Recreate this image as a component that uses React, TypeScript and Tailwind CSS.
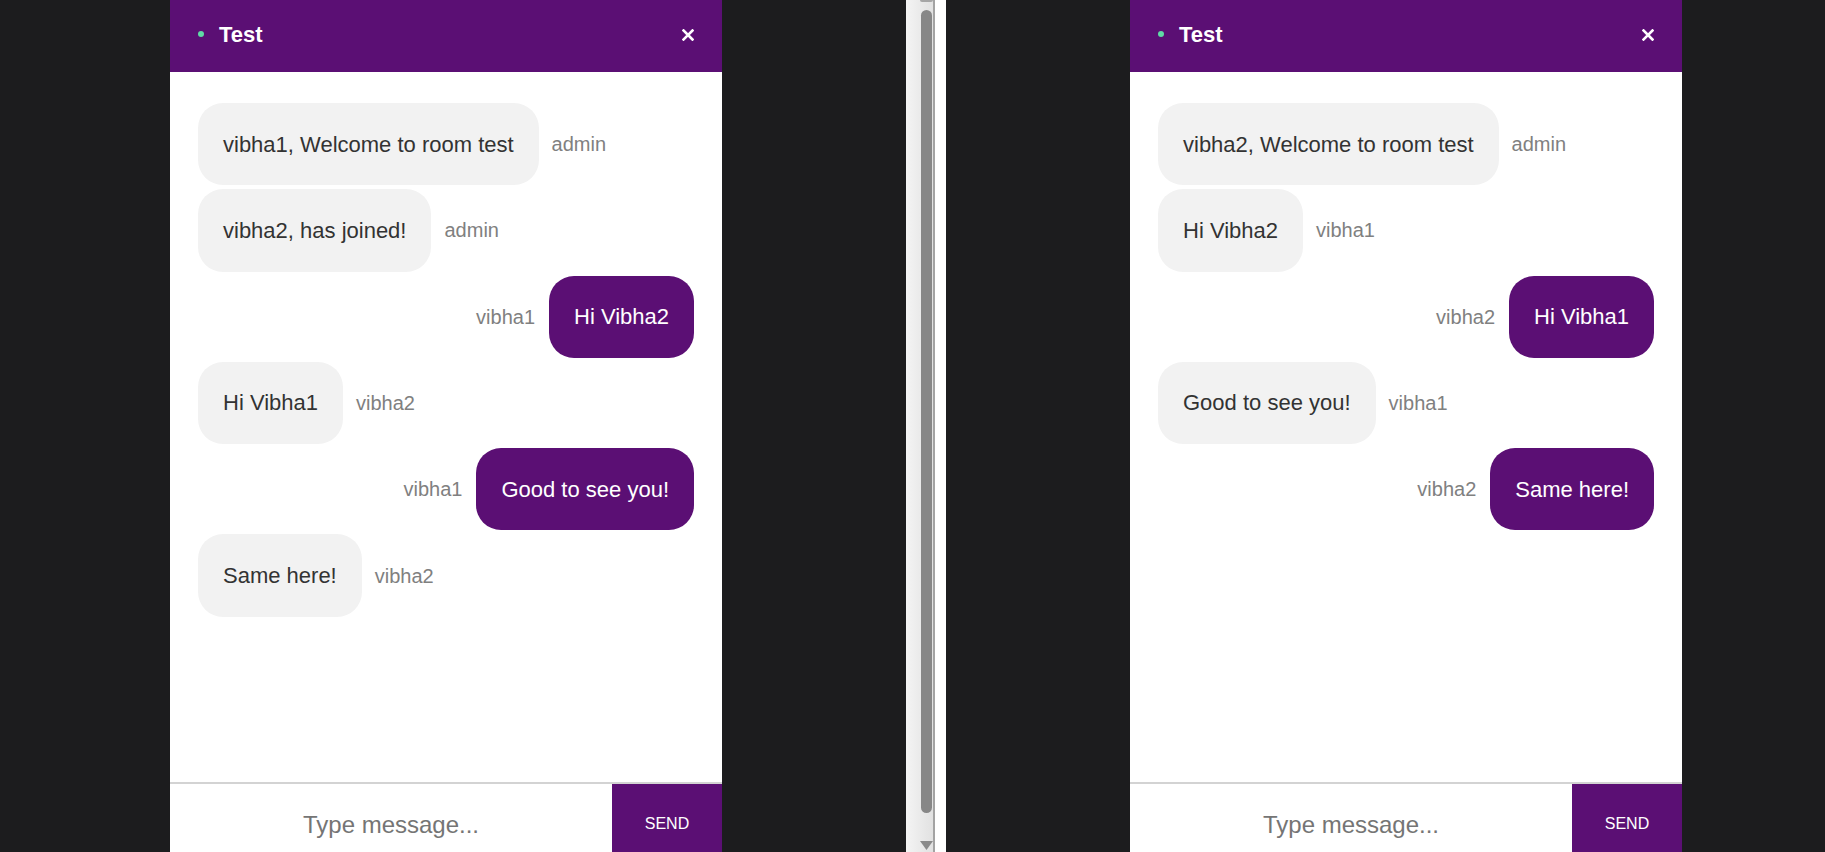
import React from "react"

interface Message {
  text: string
  user: string
  mine?: boolean
}

const leftMessages: Message[] = [
  { text: "vibha1, Welcome to room test", user: "admin" },
  { text: "vibha2, has joined!", user: "admin" },
  { text: "Hi Vibha2", user: "vibha1", mine: true },
  { text: "Hi Vibha1", user: "vibha2" },
  { text: "Good to see you!", user: "vibha1", mine: true },
  { text: "Same here!", user: "vibha2" },
]

const rightMessages: Message[] = [
  { text: "vibha2, Welcome to room test", user: "admin" },
  { text: "Hi Vibha2", user: "vibha1" },
  { text: "Hi Vibha1", user: "vibha2", mine: true },
  { text: "Good to see you!", user: "vibha1" },
  { text: "Same here!", user: "vibha2", mine: true },
]

function MessageRow({ msg }: { msg: Message }) {
  if (msg.mine) {
    return (
      <div className="flex items-center justify-end">
        <span className="mr-[14px] text-[20px] text-[#808080]">{msg.user}</span>
        <div className="rounded-[25px] bg-[#5b0f74] px-[25px] py-[28.5px] text-[22px] leading-[25.3px] text-white">
          {msg.text}
        </div>
      </div>
    )
  }
  return (
    <div className="flex items-center">
      <div className="rounded-[25px] bg-[#f2f2f2] px-[25px] py-[28.5px] text-[22px] leading-[25.3px] text-[#333]">
        {msg.text}
      </div>
      <span className="ml-[13px] text-[20px] text-[#808080]">{msg.user}</span>
    </div>
  )
}

function ChatPanel({ messages }: { messages: Message[] }) {
  return (
    <div className="flex h-[870px] w-[552px] flex-col bg-white">
      <div className="flex h-[72px] items-center justify-between bg-[#5b0f74] pb-[4px] pl-[28px] pr-[28px]">
        <div className="flex items-center">
          <span className="h-[6px] w-[6px] rounded-full bg-[#5fdba5]" />
          <span className="ml-[15px] text-[22px] font-bold text-white">Test</span>
        </div>
        <svg width="12" height="12" viewBox="0 0 12 12" className="mt-[2px]">
          <path d="M1.5 1.5 L10.5 10.5 M10.5 1.5 L1.5 10.5" stroke="white" strokeWidth="2.6" strokeLinecap="square" />
        </svg>
      </div>
      <div className="flex h-[710px] flex-col gap-[4px] px-[28px] pt-[31px]">
        {messages.map((m, i) => (
          <MessageRow key={i} msg={m} />
        ))}
      </div>
      <div className="flex h-[84px] border-t-2 border-[#d3d3d3]">
        <input
          type="text"
          placeholder="Type message..."
          className="min-w-0 flex-1 bg-transparent text-center text-[24px] outline-none placeholder:text-[#757575]"
        />
        <button type="button" className="w-[110px] bg-[#5b0f74] pb-[3px] text-[16px] text-white">
          SEND
        </button>
      </div>
    </div>
  )
}

function Scrollbar() {
  return (
    <div className="flex h-full w-[29px] bg-gradient-to-r from-[#f4f4f4] to-[#e0e0e0]">
      <div className="relative flex w-[27px] flex-col items-center pl-[13px]">
        <div className="h-[2px] w-[13px] rounded-b-[2px] bg-[#a6a6a6]" />
        <div className="mt-[8px] h-[803px] w-[11px] rounded-full bg-[#878787]" />
        <svg className="mt-[28px]" width="13" height="9" viewBox="0 0 13 9">
          <path d="M0 0 H13 L6.5 9 Z" fill="#8a8a8a" />
        </svg>
      </div>
      <div className="w-[2px] bg-[#a3a3a3]" />
    </div>
  )
}

export default function App() {
  return (
    <div className="flex h-[852px] w-[1825px] overflow-hidden bg-[#1c1c1e] font-['Liberation_Sans',Arial,sans-serif]">
      <div className="w-[906px] shrink-0 pl-[170px]">
        <ChatPanel messages={leftMessages} />
      </div>
      <Scrollbar />
      <div className="w-[11px] shrink-0 bg-white" />
      <div className="flex-1 pl-[184px]">
        <ChatPanel messages={rightMessages} />
      </div>
    </div>
  )
}
